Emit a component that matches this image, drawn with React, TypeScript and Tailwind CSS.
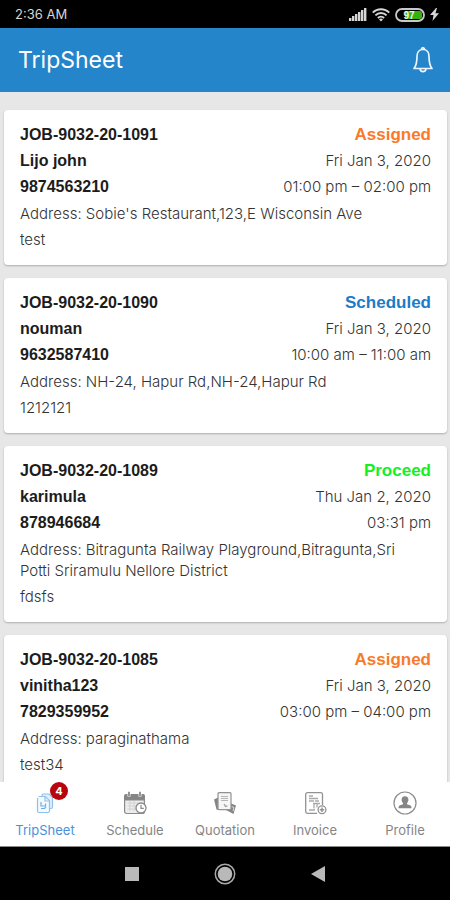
import React from 'react';

type Job = {
  id: string;
  name: string;
  phone: string;
  status: 'Assigned' | 'Scheduled' | 'Proceed';
  date: string;
  time: string;
  address: string;
  note: string;
};

const jobs: Job[] = [
  { id: 'JOB-9032-20-1091', name: 'Lijo john', phone: '9874563210', status: 'Assigned', date: 'Fri Jan 3, 2020', time: '01:00 pm – 02:00 pm', address: "Sobie's Restaurant,123,E Wisconsin Ave", note: 'test' },
  { id: 'JOB-9032-20-1090', name: 'nouman', phone: '9632587410', status: 'Scheduled', date: 'Fri Jan 3, 2020', time: '10:00 am – 11:00 am', address: 'NH-24, Hapur Rd,NH-24,Hapur Rd', note: '1212121' },
  { id: 'JOB-9032-20-1089', name: 'karimula', phone: '878946684', status: 'Proceed', date: 'Thu Jan 2, 2020', time: '03:31 pm', address: 'Bitragunta Railway Playground,Bitragunta,Sri Potti Sriramulu Nellore District', note: 'fdsfs' },
  { id: 'JOB-9032-20-1085', name: 'vinitha123', phone: '7829359952', status: 'Assigned', date: 'Fri Jan 3, 2020', time: '03:00 pm – 04:00 pm', address: 'paraginathama', note: 'test34' },
];

const statusColor: Record<Job['status'], string> = {
  Assigned: 'text-[#f97a2a]',
  Scheduled: 'text-[#1c7cc8]',
  Proceed: 'text-[#14f01e]',
};

function StatusBar() {
  return (
    <div className="flex h-7 shrink-0 items-center justify-between bg-black pt-px pr-[11px] pl-[15px] text-[#d6d6d6]">
      <span className="text-[13px]">2:36 AM</span>
      <div className="flex items-center gap-[5px]">
        <svg width="18" height="13" viewBox="0 0 18 13" fill="currentColor" aria-hidden="true">
          <rect x="0" y="10" width="2.4" height="3" />
          <rect x="3" y="8" width="2.4" height="5" />
          <rect x="6" y="6" width="2.4" height="7" />
          <rect x="9" y="4" width="2.4" height="9" />
          <rect x="12" y="2" width="2.4" height="11" />
          <rect x="15" y="0" width="2.4" height="13" />
        </svg>
        <svg width="18" height="14" viewBox="0 0 18 14" fill="none" stroke="currentColor" strokeWidth="2" aria-hidden="true">
          <path d="M.8 4.6a11.6 11.6 0 0 1 16.4 0M3.4 7.4a8 8 0 0 1 11.2 0M5.9 10a4.4 4.4 0 0 1 6.2 0" />
          <path d="M9 13.6 7 11.4a3 3 0 0 1 4 0z" fill="currentColor" stroke="none" />
        </svg>
        <svg width="30" height="14" viewBox="0 0 30 14" aria-hidden="true">
          <rect x="1" y="1" width="28" height="12" rx="6" fill="#000" stroke="#c9c9c9" strokeWidth="1.8" />
          <path d="M10 3h14.500a2.500 2.500 0 0 1 2.500 2.500v3a2.500 2.500 0 0 1-2.500 2.500H10z" fill="#35b20f" />
          <text x="14" y="11" textAnchor="middle" fontSize="10" fontWeight="700" fill="#f2f2f2" fontFamily="Liberation Sans, sans-serif">97</text>
        </svg>
        <svg width="9" height="13" viewBox="0 0 9 13" fill="currentColor" aria-hidden="true">
          <path d="M6 0 0 7h3.500L2.500 13 9 5.300H5.500L7 0z" />
        </svg>
      </div>
    </div>
  );
}

function JobCard({ job }: { job: Job }) {
  return (
    <article className="shrink-0 rounded-sm bg-white px-4 pt-3 pb-[15px] text-[15px] font-light text-[#333333] shadow-[0_1px_2px_rgba(0,0,0,0.25)]">
      <div className="flex justify-between">
        <div className="font-['Liberation_Sans',Arial,sans-serif] text-base leading-[26px] font-bold text-[#1c1c1c]">
          <h2>{job.id}</h2>
          <p>{job.name}</p>
          <p>{job.phone}</p>
        </div>
        <div className="text-right leading-[26px]">
          <p className={"font-['Liberation_Sans',Arial,sans-serif] text-[17px] leading-[26px] font-bold " + statusColor[job.status]}>{job.status}</p>
          <p>{job.date}</p>
          <p>{job.time}</p>
        </div>
      </div>
      <p className="mt-[3px] pr-2 leading-[21px]">{`Address: ${job.address}`}</p>
      <p className="mt-[5px] leading-[21px]">{job.note}</p>
    </article>
  );
}

function TripSheetIcon() {
  return (
    <svg width="24" height="24" viewBox="0 0 24 24" fill="none" stroke="#8fc0ea" strokeWidth="1.200" aria-hidden="true">
      <path d="M9 6V4.500A1.500 1.500 0 0 1 10.500 3H16l3.500 3.500V16a1.500 1.500 0 0 1-1.500 1.500h-1.500" fill="#e3f0fb" />
      <path d="M5.500 5.500h6.800l4.200 4.200V20a1.500 1.500 0 0 1-1.500 1.500H6A1.500 1.500 0 0 1 4.500 20V7" fill="#f3f9fe" />
      <path d="M12 5.500V10h4.500" />
      <path d="M8 11v4h4.500v-2.500M8 17.500h3.500l1.500-1.500" stroke="#6badE4" />
    </svg>
  );
}

function ScheduleIcon() {
  return (
    <svg width="24" height="24" viewBox="0 0 24 24" aria-hidden="true">
      <path d="M1 5a2 2 0 0 1 2-2h17a2 2 0 0 1 2 2v4H1z" fill="#858585" />
      <path d="M1.600 9v11.500a2 2 0 0 0 2 2h15.800a2 2 0 0 0 2-2V9z" fill="#ededed" stroke="#8a8a8a" strokeWidth="1.200" />
      <path d="M4.500 12h12M4.500 15h12M4.500 18h10M7 10v10M11 10v10" stroke="#d2d2d2" strokeWidth="1" />
      <path d="M6 1v4.500M17 1v4.500" stroke="#fff" strokeWidth="3" />
      <path d="M6 .8v4.200M17 .8v4.200" stroke="#7b7b7b" strokeWidth="1.600" />
      <circle cx="18" cy="17" r="5" fill="#fff" stroke="#8a8a8a" strokeWidth="1.300" />
      <path d="M18 13.800V17.300h2.800" fill="none" stroke="#8a8a8a" strokeWidth="1.200" />
    </svg>
  );
}

function QuotationIcon() {
  return (
    <svg width="24" height="24" viewBox="0 0 24 24" aria-hidden="true">
      <path d="M1 8.500 5 6.500V19L3.500 18.500z" fill="#858585" />
      <path d="M12 18.500 17 12l6 2.500-2.500 8.500z" fill="#858585" />
      <path d="m18.500 15.500 2.500 1-1 3.500" fill="none" stroke="#dedede" strokeWidth="1" />
      <rect x="5" y="1.600" width="13" height="17" rx="1" fill="#f6f6f6" stroke="#929292" strokeWidth="1.200" />
      <path d="M8 5.500h7M8 7.500h7M8 9.500h7" stroke="#b5b5b5" strokeWidth="1.200" />
      <path d="m11 13 1.500 2.500 2-.8" fill="none" stroke="#999" strokeWidth="1.200" />
    </svg>
  );
}

function InvoiceIcon() {
  return (
    <svg width="24" height="24" viewBox="0 0 24 24" fill="none" stroke="#929292" strokeWidth="1.300" aria-hidden="true">
      <path d="M14 22.400H4.500A1.800 1.800 0 0 1 2.700 20.600V3.400A1.800 1.800 0 0 1 4.500 1.600h13.200a1.800 1.800 0 0 1 1.800 1.800V14" />
      <path d="M6 5h4M6 7.500h9M6 10h5M10 12.500h7M6 19h6M11 12.500v5M14 12.500v4M12 10h4" stroke="#a9a9a9" />
      <circle cx="19" cy="18.800" r="3.900" fill="#fff" />
      <path d="M19 16.600V21M16.800 18.800h4.400" strokeWidth="1.500" />
    </svg>
  );
}

function ProfileIcon() {
  return (
    <svg width="24" height="24" viewBox="0 0 24 24" fill="none" aria-hidden="true">
      <circle cx="12" cy="12" r="11" stroke="#8c8c8c" strokeWidth="1.200" />
      <path d="M12 5.200c2.300 0 3.600 1.600 3.400 3.900-.1 1.300-.6 2.400-1.400 3v1.100l3 1.100c1.100.4 1.500 1.300 1.500 3H5.500c0-1.700.4-2.600 1.500-3l3-1.100v-1.100c-.8-.6-1.300-1.700-1.400-3C8.400 6.800 9.700 5.200 12 5.200z" fill="#858585" />
    </svg>
  );
}

const tabs = [
  { label: 'TripSheet', Icon: TripSheetIcon, active: true, badge: '4' },
  { label: 'Schedule', Icon: ScheduleIcon },
  { label: 'Quotation', Icon: QuotationIcon },
  { label: 'Invoice', Icon: InvoiceIcon },
  { label: 'Profile', Icon: ProfileIcon },
];

export default function App() {
  return (
    <div className="flex h-screen flex-col bg-[#e7e7e7] font-['Inter','Open_Sans',sans-serif]">
      <StatusBar />
      <header className="flex h-16 shrink-0 items-center justify-between bg-[#2585cb] pr-4 pl-[18px] text-white">
        <h1 className="text-[23px]">TripSheet</h1>
        <button type="button" aria-label="Notifications">
          <svg width="22" height="26" viewBox="0 0 22 26" fill="none" stroke="#eaf5ff" strokeWidth="1.700" strokeLinejoin="round" aria-hidden="true">
            <path d="M11 2.500c-4 0-6 3-6 6.700 0 5.800-.3 9-3 12.300h18C17.300 18.200 17 15 17 9.200c0-3.700-2-6.700-6-6.700z" />
            <path d="M9.500 2.300a1.500 1.500 0 0 1 3 0M8 22c.4 1.700 1.500 2.600 3 2.600s2.600-.9 3-2.600" />
          </svg>
        </button>
      </header>
      <main className="flex min-h-0 flex-1 flex-col gap-[13px] overflow-hidden pt-[18px] pr-[3px] pl-1">
        {jobs.map((job) => (
          <JobCard key={job.id} job={job} />
        ))}
      </main>
      <nav className="grid h-[65px] shrink-0 grid-cols-5 border-b border-[#8a8a8a] bg-white">
        {tabs.map(({ label, Icon, active, badge }) => (
          <button key={label} type="button" className={'flex flex-col items-center gap-[5px] pt-[9px] text-[13px] leading-5 ' + (active ? 'text-[#4a92d8]' : 'text-[#858585]')}>
            <span className="relative">
              <Icon />
              {badge && (
                <span className="absolute -top-[9px] -right-[11px] flex size-[18px] items-center justify-center rounded-full bg-[#b9040e] text-[11px] leading-none font-bold text-white">{badge}</span>
              )}
            </span>
            {label}
          </button>
        ))}
      </nav>
      <div className="flex h-[53px] shrink-0 items-center justify-center gap-[71px] bg-black">
        <button type="button" aria-label="Recent apps" className="flex w-[22px] justify-center">
          <span className="size-[14px] bg-[#b9b9b9]" />
        </button>
        <button type="button" aria-label="Home" className="w-[22px]">
          <svg width="22" height="22" viewBox="0 0 22 22" aria-hidden="true">
            <circle cx="11" cy="11" r="9.700" fill="none" stroke="#a8a8a8" strokeWidth="1.500" />
            <circle cx="11" cy="11" r="7.300" fill="#b9b9b9" />
          </svg>
        </button>
        <button type="button" aria-label="Back" className="flex w-[22px] justify-center">
          <svg width="14" height="16" viewBox="0 0 14 16" aria-hidden="true">
            <path d="M14 0v16L0 8z" fill="#b9b9b9" />
          </svg>
        </button>
      </div>
    </div>
  );
}
